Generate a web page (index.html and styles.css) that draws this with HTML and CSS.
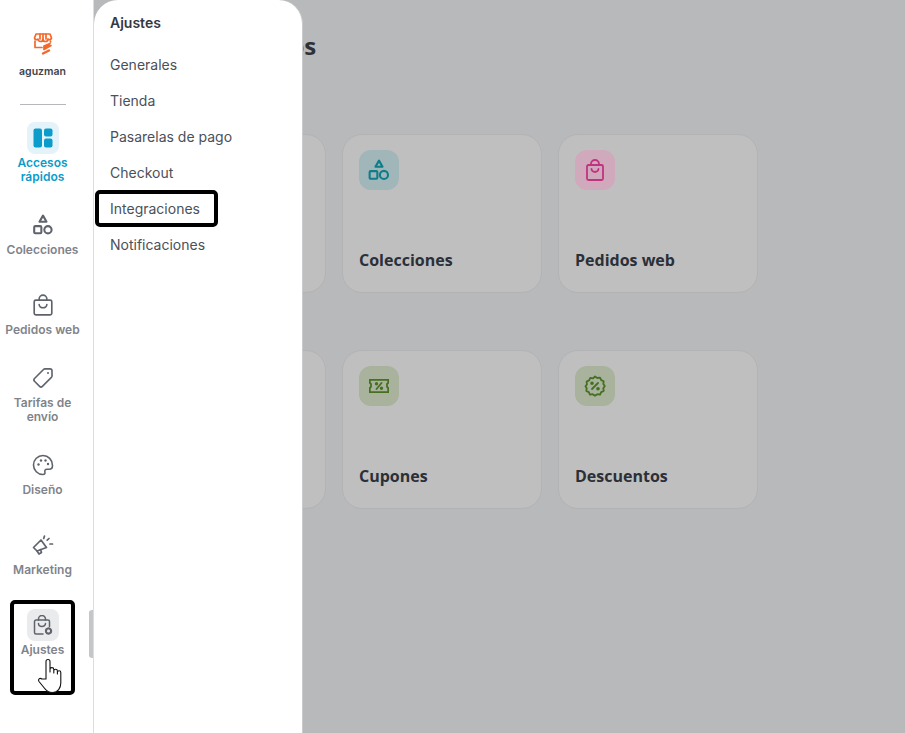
FILE: index.html

```html
<!DOCTYPE html>
<html>
  <head>
    <title>Ajustes</title>
    <link rel="stylesheet" href="styles.css">
  </head>
  <body>
    <div class="app">
      <nav class="sidebar">
        <div class="brand">
          <svg class="logo" width="20" height="22" viewBox="0 0 20 22" fill="none" stroke="#f4682a" stroke-width="1.7" stroke-linejoin="round" stroke-linecap="round">
            <path d="M3 1h14l1.500 4a2 2 0 0 1-3.500 1 2.400 2.400 0 0 1-5 0 2.400 2.400 0 0 1-5 0A2 2 0 0 1 1.500 5z"/>
            <path d="M7 1v5M10 1v5M13 1v5"/>
            <path d="M2 8v6.500h7M17.500 8v1"/>
            <path d="M11 13l6-2.500-3 3 4-1-7 4z" fill="#f4682a"/>
            <path d="M10 20.500l6-3" stroke-width="2.400"/>
          </svg>
          <span class="brand-name">aguzman</span>
        </div>
        <hr class="divider">
        <div class="nav-items">
          <a class="nav-item active">
            <span class="nav-icon">
              <svg width="20" height="20" viewBox="0 0 20 20" fill="#0a9ccb"><rect x="0.500" y="0.500" width="8.500" height="19" rx="2"/><rect x="11" y="0.500" width="8.500" height="8" rx="2"/><rect x="11" y="10.500" width="8.500" height="9" rx="2"/></svg>
            </span>
            <span class="nav-label">Accesos rápidos</span>
          </a>
          <a class="nav-item">
            <span class="nav-icon">
              <svg width="22" height="22" viewBox="0 0 20 20" fill="none" stroke="currentColor" stroke-width="1.900" stroke-linejoin="round"><path d="M10 1.500l3.200 5.500H6.800z"/><rect x="2" y="11" width="6.500" height="6.500" rx="1"/><circle cx="14.500" cy="14.300" r="3.300"/></svg>
            </span>
            <span class="nav-label">Colecciones</span>
          </a>
          <a class="nav-item">
            <span class="nav-icon">
              <svg width="22" height="22" viewBox="0 0 20 20" fill="none" stroke="currentColor" stroke-width="1.500" stroke-linecap="round" stroke-linejoin="round"><rect x="2" y="5.500" width="16" height="13.500" rx="1.500"/><path d="M6.500 5.500V4.500a3.500 3.500 0 0 1 7 0v1"/><path d="M6.500 9.500a3.500 3 0 0 0 7 0"/></svg>
            </span>
            <span class="nav-label">Pedidos web</span>
          </a>
          <a class="nav-item">
            <span class="nav-icon">
              <svg width="22" height="22" viewBox="0 0 22 22" fill="none" stroke="currentColor" stroke-width="1.600" stroke-linejoin="round"><path d="M2.500 11.500L11.500 2.500a2 2 0 0 1 1.500-.6h5a2 2 0 0 1 2 2v5a2 2 0 0 1-.6 1.500l-9 9a2 2 0 0 1-2.800 0l-5.100-5.100a2 2 0 0 1 0-2.800z"/><circle cx="16" cy="6" r="1" fill="currentColor" stroke="none"/></svg>
            </span>
            <span class="nav-label">Tarifas de envío</span>
          </a>
          <a class="nav-item">
            <span class="nav-icon">
              <svg width="22" height="22" viewBox="0 0 22 22" fill="none" stroke="currentColor" stroke-width="1.600" stroke-linejoin="round"><path d="M11 1.500a9.500 9.500 0 0 0 0 19c1.600 0 2.300-1.100 1.900-2.300-.5-1.500.3-2.900 2-2.900h2.300c1.900 0 3.300-1.500 3.300-3.800 0-5.700-4.300-10-9.500-10z"/><circle cx="6.500" cy="10.500" r="1.200" fill="currentColor" stroke="none"/><circle cx="9" cy="6.500" r="1.200" fill="currentColor" stroke="none"/><circle cx="13.500" cy="6.500" r="1.200" fill="currentColor" stroke="none"/><circle cx="16" cy="10" r="1.200" fill="currentColor" stroke="none"/></svg>
            </span>
            <span class="nav-label">Diseño</span>
          </a>
          <a class="nav-item">
            <span class="nav-icon">
              <svg width="22" height="22" viewBox="0 0 22 22" fill="none" stroke="currentColor" stroke-width="1.700" stroke-linecap="round" stroke-linejoin="round"><path d="M1.500 13.500L9 6l5.500 7.500-9.500 3.500z"/><path d="M5 17l2 3 2.500-1.500-1-3"/><path d="M12.500 2l-.8 2.500M20.500 10h-2.500M17 4.500l-1.800 1.700"/></svg>
            </span>
            <span class="nav-label">Marketing</span>
          </a>
          <a class="nav-item hovered">
            <span class="nav-icon">
              <svg width="20" height="21" viewBox="0 0 20 21" fill="none" stroke="currentColor" stroke-width="1.500" stroke-linecap="round" stroke-linejoin="round"><path d="M10 19H3a1.500 1.500 0 0 1-1.500-1.500V6.500A1.500 1.500 0 0 1 3 5h12a1.500 1.500 0 0 1 1.500 1.500v5"/><path d="M5.500 5V4a3.500 3.500 0 0 1 7 0v1"/><path d="M5.500 8.500a3.500 3 0 0 0 7 0"/><circle cx="15.500" cy="16" r="2.600" stroke-dasharray="1.600 1.200" stroke-width="2.200"/></svg>
            </span>
            <span class="nav-label">Ajustes</span>
          </a>
        </div>
        <span class="scroll-thumb"></span>
      </nav>

      <main class="content">
        <h1 class="page-title">Accesos rápidos</h1>
        <div class="card-grid first-row">
          <div class="card"></div>
          <div class="card">
            <span class="card-icon teal">
              <svg width="22" height="22" viewBox="0 0 20 20" fill="none" stroke="currentColor" stroke-width="1.900" stroke-linejoin="round"><path d="M10 1.500l3.200 5.500H6.800z"/><rect x="1.500" y="11" width="7" height="7" rx="1"/><circle cx="14.500" cy="14.500" r="3.700"/></svg>
            </span>
            <span class="card-title">Colecciones</span>
          </div>
          <div class="card">
            <span class="card-icon pink">
              <svg width="20" height="22" viewBox="0 0 20 22" fill="none" stroke="currentColor" stroke-width="1.800" stroke-linecap="round" stroke-linejoin="round"><rect x="2" y="6" width="16" height="15" rx="1.500"/><path d="M6 6V5a4 4 0 0 1 8 0v1"/><path d="M6.500 10a3.500 3 0 0 0 7 0"/></svg>
            </span>
            <span class="card-title">Pedidos web</span>
          </div>
        </div>
        <div class="card-grid">
          <div class="card"></div>
          <div class="card">
            <span class="card-icon green">
              <svg width="20" height="14" viewBox="0 0 20 14" fill="none" stroke="currentColor" stroke-width="1.800" stroke-linecap="round" stroke-linejoin="round"><path d="M.800.800h18.400v3l-1.200 1.200v2.800l1.200 1.200v4.200H.800V9l1.200-1.200V5L.800 3.800z"/><path d="M12.500 4l-5 6"/><circle cx="7.500" cy="4.800" r=".8"/><circle cx="12.500" cy="9.200" r=".8"/></svg>
            </span>
            <span class="card-title">Cupones</span>
          </div>
          <div class="card">
            <span class="card-icon green">
              <svg width="22" height="22" viewBox="0 0 22 22" fill="none" stroke="currentColor" stroke-width="1.800" stroke-linecap="round" stroke-linejoin="round"><path d="M11 1.500l2.300 1.500 2.700-.4 1.200 2.500 2.500 1.200-.4 2.700 1.500 2-1.500 2.300.4 2.600-2.500 1.200-1.200 2.500-2.700-.4-2.300 1.500-2.300-1.500-2.700.4-1.200-2.500-2.500-1.200.4-2.600L1.500 11.300l1.500-2-.4-2.700 2.500-1.200 1.200-2.500 2.700.4z"/><path d="M14 8l-6 6"/><circle cx="8" cy="8.300" r=".9"/><circle cx="14" cy="13.700" r=".9"/></svg>
            </span>
            <span class="card-title">Descuentos</span>
          </div>
        </div>
      </main>

      <aside class="submenu">
        <h2 class="submenu-title">Ajustes</h2>
        <a class="submenu-link">Generales</a>
        <a class="submenu-link">Tienda</a>
        <a class="submenu-link">Pasarelas de pago</a>
        <a class="submenu-link">Checkout</a>
        <a class="submenu-link">Integraciones</a>
        <a class="submenu-link">Notificaciones</a>
      </aside>

      <!-- tutorial marks drawn over the screenshot -->
      <span class="mark mark-link"></span>
      <span class="mark mark-nav"></span>
      <svg class="hand" width="26" height="36" viewBox="0 0 26 36" fill="#fff" stroke="#111" stroke-width="1.100" stroke-linejoin="round" stroke-linecap="round">
        <path d="M9 21V3.500a2 2 0 0 1 4 0V14l0-2.500a1.900 1.900 0 0 1 3.800 0V15l0-2a1.800 1.800 0 0 1 3.600 0v3l0-1.500a1.700 1.700 0 0 1 3.400 0V25c0 5-3 9.500-8 9.500-4 0-6.500-1.500-8.500-4.500L2 23.500c-1.500-2 .8-4 2.800-2.500z"/>
      </svg>
    </div>
  </body>
</html>
```

FILE: styles.css

```css
* {
    box-sizing: border-box;
}
html, body {
    margin: 0;
    height: 100%;
    overflow: hidden;
}
body {
    font-family: "Inter", "Liberation Sans", sans-serif;
    background: #b8b9bb;
}
.app {
    position: relative;
    display: flex;
    height: 733px;
    width: 905px;
}

/* left rail */
.sidebar {
    position: relative;
    flex: 0 0 94px;
    background: #fff;
    border-right: 1px solid #dcdde0;
    padding: 33px 8px 0 0;
}
.brand {
    display: flex;
    flex-direction: column;
    align-items: center;
}
.logo {
    display: block;
}
.brand-name {
    margin-top: 10px;
    font-size: 10.5px;
    line-height: 14px;
    font-weight: 600;
    color: #3f434c;
}
.divider {
    width: 46px;
    margin: 25px 0 0 20px;
    border: 0;
    border-top: 1px solid #b5b7bb;
}
.nav-items {
    display: grid;
    grid-template-rows: 87px 80px 73px 87px 80px 80px;
    margin-top: 17px;
}
.nav-item {
    display: flex;
    flex-direction: column;
    align-items: center;
    color: #6f747c;
}
.nav-icon {
    display: flex;
    align-items: center;
    justify-content: center;
    width: 32px;
    height: 32px;
    border-radius: 8px;
    color: #5f646c;
}
.nav-label {
    margin-top: 2px;
    width: 76px;
    font-size: 12px;
    line-height: 14px;
    font-weight: 600;
    text-align: center;
    color: #7f848b;
}
.active .nav-icon {
    background: #e3f3f9;
}
.active .nav-label {
    color: #0a9ccb;
}
.hovered .nav-icon {
    background: #eaebed;
}
.scroll-thumb {
    position: absolute;
    left: 89px;
    top: 610px;
    width: 4px;
    height: 48px;
    border-radius: 3px 0 0 3px;
    background: #c4c6c9;
}

/* dimmed page behind the submenu */
.content {
    flex: 1;
    padding: 36px 0 0 32px;
}
.page-title {
    margin: 0;
    font-family: "Open Sans", "Liberation Sans", sans-serif;
    font-size: 24px;
    line-height: 20px;
    font-weight: 700;
    color: #2f3136;
}
.card-grid {
    display: grid;
    grid-template-columns: repeat(3, 200px);
    gap: 16px;
    margin-top: 57px;
}
.first-row {
    margin-top: 78px;
}
.card {
    display: flex;
    flex-direction: column;
    justify-content: space-between;
    height: 159px;
    padding: 15px 16px 21px;
    border: 1px solid #b2b3b5;
    border-radius: 20px;
    background: #bfbfbf;
}
.card-icon {
    display: flex;
    align-items: center;
    justify-content: center;
    width: 40px;
    height: 40px;
    border-radius: 12px;
}
.teal {
    background: #a0b6b9;
    color: #0f7c8a;
}
.pink {
    background: #d0a9bd;
    color: #c0337f;
}
.green {
    background: #a9b29d;
    color: #44701f;
}
.card-title {
    font-family: "Open Sans", "Liberation Sans", sans-serif;
    font-size: 16px;
    line-height: 22px;
    font-weight: 700;
    color: #2b2f38;
}

/* submenu panel over the page */
.submenu {
    position: absolute;
    left: 94px;
    top: 0;
    bottom: 0;
    width: 209px;
    display: flex;
    flex-direction: column;
    gap: 16px;
    padding: 14px 16px 0;
    background: #fff;
    border-right: 1px solid #c9cacc;
    border-radius: 24px 24px 0 0;
}
.submenu-title {
    margin: 0 0 7px;
    font-size: 14px;
    line-height: 18px;
    font-weight: 600;
    color: #343843;
}
.submenu-link {
    font-size: 14px;
    line-height: 20px;
    color: #4b5059;
}

.mark {
    position: absolute;
    border: 4px solid #000;
    border-radius: 5px;
}
.mark-link {
    left: 95px;
    top: 190px;
    width: 123px;
    height: 37px;
}
.mark-nav {
    left: 10px;
    top: 600px;
    width: 65px;
    height: 95px;
}
.hand {
    position: absolute;
    left: 37px;
    top: 658px;
}
```
